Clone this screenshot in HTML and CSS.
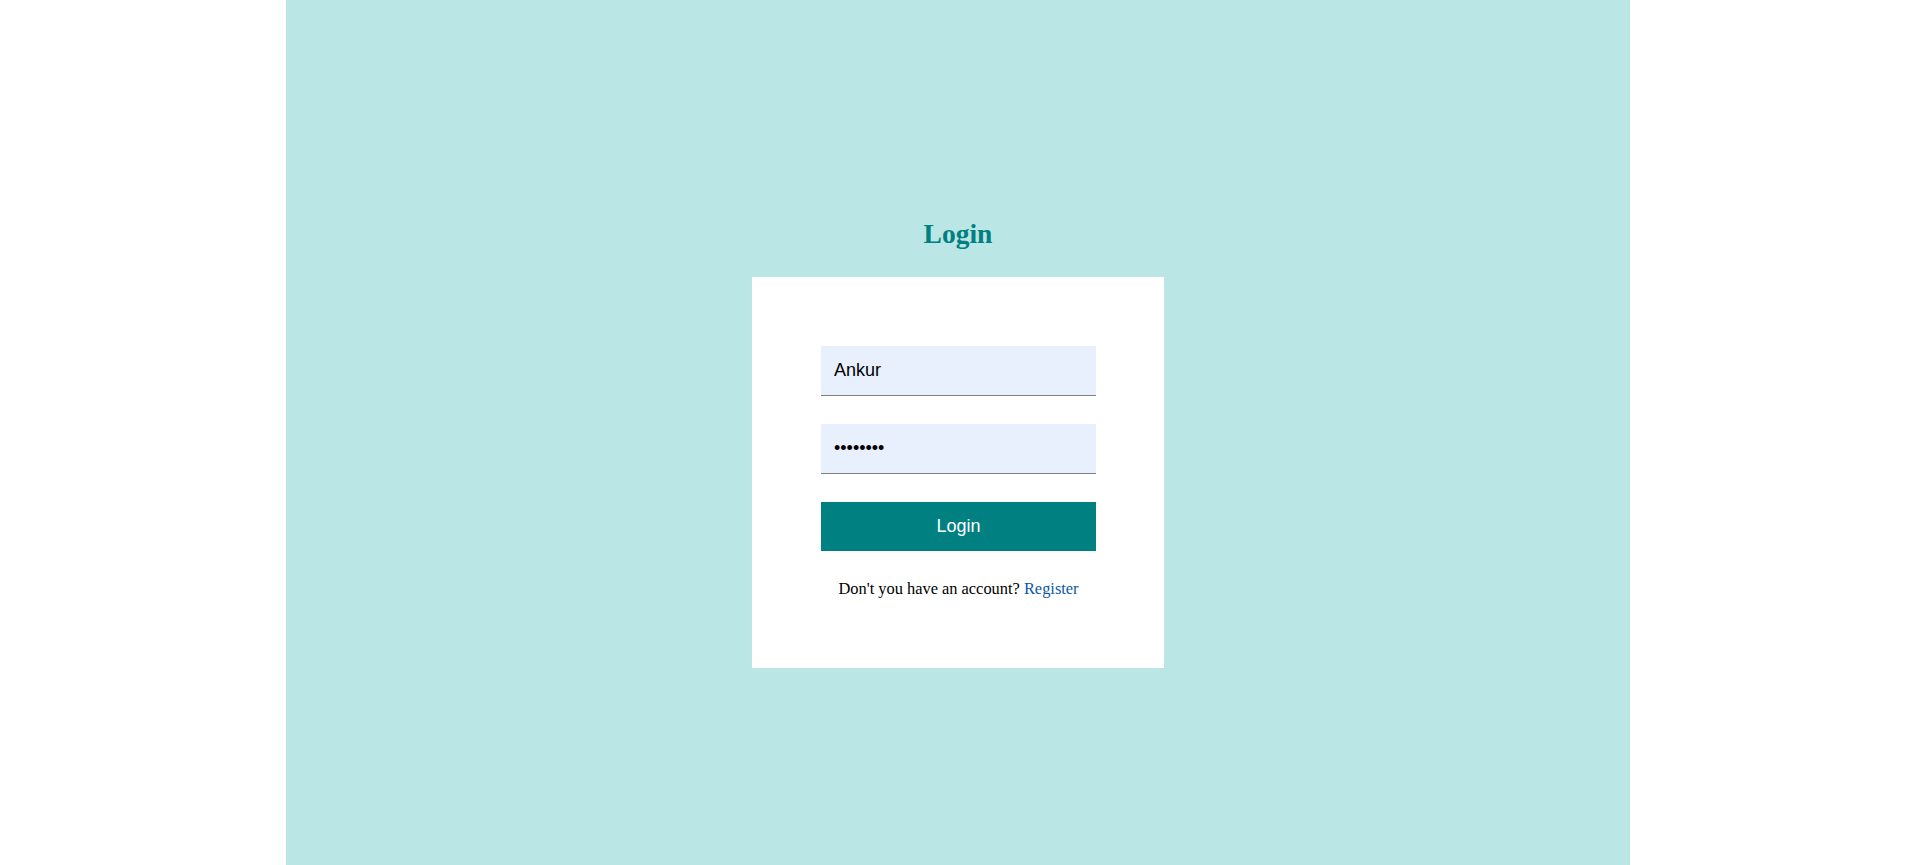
FILE: index.html
```html
<!DOCTYPE html>
<html lang="en">
<head>
<meta charset="utf-8">
<title>Login</title>
<link rel="stylesheet" href="styles.css">
</head>
<body>
<main class="page">
  <h2 class="title">Login</h2>
  <form class="card">
    <input class="field" type="text" value="Ankur">
    <input class="field" type="password" value="12345678">
    <button class="btn" type="button">Login</button>
    <p class="note">Don't you have an account? <a class="link" href="#">Register</a></p>
  </form>
</main>
</body>
</html>
```
FILE: styles.css
```css
html, body {
  margin: 0;
  padding: 0;
  background: #ffffff;
}
body {
  display: flex;
  justify-content: center;
  padding-right: 1px;
}
.page {
  width: 1344px;
  min-height: 865px;
  background: #bae6e6;
  display: flex;
  flex-direction: column;
  align-items: center;
  padding-top: 218px;
  box-sizing: border-box;
  font-family: "Liberation Serif", "Times New Roman", serif;
}
.title {
  margin: 0 0 27px;
  font-size: 27.5px;
  line-height: 32px;
  font-weight: bold;
  color: #008080;
}
.card {
  width: 412px;
  box-sizing: border-box;
  background: #ffffff;
  padding: 69px 68px 70px 69px;
  display: flex;
  flex-direction: column;
  gap: 28px;
}
.field {
  height: 50px;
  box-sizing: border-box;
  border: none;
  border-bottom: 1px solid #808080;
  background: #e8f0fe;
  padding: 0 12px 0 13px;
  margin: 0;
  font-family: "Liberation Sans", Arial, sans-serif;
  font-size: 18px;
  color: #000000;
  outline: none;
}
.btn {
  height: 49px;
  border: none;
  margin: 0;
  background: #008080;
  color: #ffffff;
  font-family: "Liberation Sans", Arial, sans-serif;
  font-size: 18px;
  padding: 0;
}
.note {
  margin: 0;
  padding-top: 1px;
  text-align: center;
  font-size: 16.4px;
  line-height: 18px;
  color: #000000;
}
.link {
  color: #0b58a8;
  text-decoration: none;
}
```
